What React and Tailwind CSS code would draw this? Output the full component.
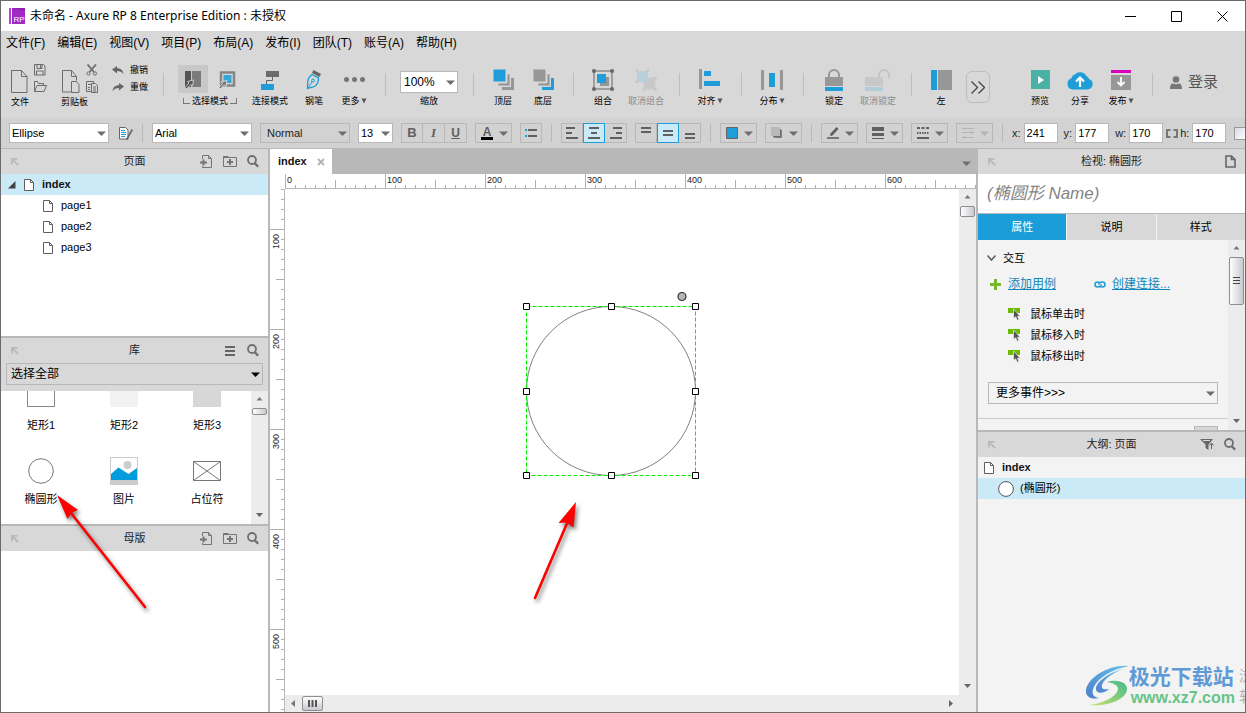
import React from "react";

/* ---------- shared pieces ---------- */

function Caret({ className = "text-[#6e6e6e]" }) {
  return (
    <svg width="9" height="5" viewBox="0 0 9 5" className={"shrink-0 " + className} aria-hidden="true">
      <path d="M0 0.5h9L4.5 5z" fill="currentColor" />
    </svg>
  );
}

function Select({ label, value, className, textClass = "text-[11px]", caret }) {
  return (
    <div className={"relative shrink-0 " + className}>
      <select
        aria-label={label}
        defaultValue={value}
        className={"block h-full w-full appearance-none border border-[#b8b8b8] bg-transparent outline-none " + textClass}
      >
        <option>{value}</option>
      </select>
      <span className="pointer-events-none absolute inset-y-0 right-[3px] flex items-center pt-px">
        <Caret className={caret} />
      </span>
    </div>
  );
}

function PageIcon({ w = 10, h = 12 }) {
  return (
    <svg width={w} height={h} viewBox="0 0 10 12" fill="none" className="shrink-0" aria-hidden="true">
      <path d="M0.5 0.5h6l3 3v8h-9z" fill="#fff" stroke="#5f5f5f" />
      <path d="M6.5 0.5v3h3" stroke="#5f5f5f" />
    </svg>
  );
}

function PinIcon() {
  return (
    <svg width="8" height="8" viewBox="0 0 8 8" fill="none" stroke="#b9b9b9" strokeWidth="1.800" aria-hidden="true">
      <path d="M.9 6.500V.9h5.600M1 1l6.200 6.200" />
    </svg>
  );
}

function SearchIcon() {
  return (
    <svg width="12" height="13" viewBox="0 0 12 13" fill="none" stroke="#6f6f6f" aria-hidden="true">
      <circle cx="5" cy="5" r="4" strokeWidth="1.8" />
      <path d="M7.8 8.2l3.4 3.6" strokeWidth="2.4" />
    </svg>
  );
}

function AddPageIcon() {
  return (
    <svg width="13" height="14" viewBox="0 0 13 14" fill="none" stroke="#757575" aria-hidden="true">
      <path d="M2.500 4V.5h6l3 3v9h-9V11" />
      <path d="M8.500.5v3h3" />
      <path d="M0 7.500h7M3.500 4.500v6" strokeWidth="2" />
    </svg>
  );
}

function AddFolderIcon() {
  return (
    <svg width="14" height="13" viewBox="0 0 14 13" fill="none" stroke="#757575" aria-hidden="true">
      <path d="M0.500 11.500V1.500h4l1 1h8v9z" />
      <path d="M0.500 2h5" strokeWidth="2" />
      <path d="M4 7h6M7 4v6" strokeWidth="2" />
    </svg>
  );
}

function PanelHeader({ title, children }) {
  return (
    <div className="grid h-[25px] shrink-0 grid-cols-[1fr_auto_1fr] items-center bg-[#d8d8d8] text-[#222]">
      <button aria-label="停靠" className="ml-[10px] w-3"><PinIcon /></button>
      <h2 className="text-[11px]">{title}</h2>
      <div className="flex items-center justify-end gap-[10px] pr-[9px]">{children}</div>
    </div>
  );
}

function ScrollThumbV({ className, grip }) {
  return (
    <div className={"flex w-[15px] items-center justify-center rounded-[2px] border border-[#8e8e8e] bg-linear-to-r from-white to-[#c9c9cf] " + className}>
      {grip && (
        <svg width="7" height="8" viewBox="0 0 7 8" stroke="#444" aria-hidden="true">
          <path d="M0 .5h7M0 3.500h7M0 6.500h7" />
        </svg>
      )}
    </div>
  );
}

function VScroll({ thumb, grip }) {
  return (
    <div className="flex w-[17px] shrink-0 flex-col items-center bg-[#ececec]">
      <svg width="7" height="17" viewBox="0 0 7 17" className="shrink-0" aria-hidden="true"><path d="M3.500 6L6.500 9.500h-6z" fill="#777" /></svg>
      <ScrollThumbV className={thumb} grip={grip} />
      <div className="flex-1" />
      <svg width="7" height="18" viewBox="0 0 7 18" className="shrink-0" aria-hidden="true"><path d="M0 7h7L3.500 11z" fill="#666" /></svg>
    </div>
  );
}

/* ---------- title and menu ---------- */

function TitleBar() {
  return (
    <header className="flex h-[30px] shrink-0 items-center bg-white pl-2">
      <svg width="16" height="16" viewBox="0 0 16 16" className="shrink-0" aria-hidden="true">
        <rect width="16" height="16" fill="#a02bc4" />
        <path d="M0 0h2v16H0z" fill="#b441d8" />
        <path d="M2.500 0v16" stroke="#fff" />
        <path d="M3 0h13v3z" fill="#8a1fae" />
        <text x="4.500" y="14" fontSize="8" fill="#fff" fontFamily="Liberation Sans, sans-serif">RP</text>
      </svg>
      <h1 className="ml-[5px] flex-1 font-['Noto_Sans','Noto_Sans_CJK_SC',sans-serif] text-[12px] leading-4 text-black">
        未命名 - Axure RP 8 Enterprise Edition : 未授权
      </h1>
      <button aria-label="最小化" className="flex h-full w-[46px] items-center justify-center">
        <svg width="11" height="11" viewBox="0 0 11 11" stroke="#000"><path d="M0 5.500h11" /></svg>
      </button>
      <button aria-label="最大化" className="flex h-full w-[46px] items-center justify-center">
        <svg width="11" height="11" viewBox="0 0 11 11" fill="none" stroke="#000"><path d="M.5.5h10v10H.5z" /></svg>
      </button>
      <button aria-label="关闭" className="flex h-full w-[46px] items-center justify-center">
        <svg width="11" height="11" viewBox="0 0 11 11" stroke="#000"><path d="M.5.5l10 10M10.500.5l-10 10" /></svg>
      </button>
    </header>
  );
}

const MENUS = ["文件(F)", "编辑(E)", "视图(V)", "项目(P)", "布局(A)", "发布(I)", "团队(T)", "账号(A)", "帮助(H)"];

function MenuBar() {
  return (
    <nav className="flex h-[24px] shrink-0 items-center gap-3 bg-[#d8d8d8] pl-[5px] text-[12px] text-black">
      {MENUS.map((m) => <button key={m} className="shrink-0 whitespace-nowrap">{m}</button>)}
    </nav>
  );
}

/* ---------- main toolbar ---------- */

function Sep() {
  return <div className="mt-[9px] mr-[14px] ml-[15px] h-[23px] w-px shrink-0 bg-[#bdbdbd]" />;
}

function Tool({ label, width = "w-[30px]", dim, menu, children }) {
  return (
    <button className={"flex shrink-0 flex-col items-center " + width}>
      <span className="flex h-[31px] items-center justify-center">{children}</span>
      <span className={"flex items-center gap-px text-[9px] leading-3 whitespace-nowrap " + (dim ? "text-[#8c8c8c]" : "text-black")}>
        {label}
        {menu && (
          <svg width="6" height="6" viewBox="0 0 6 6" aria-hidden="true"><path d="M0.500 0.500h5L3 5.500z" fill="#555" /></svg>
        )}
      </span>
    </button>
  );
}

function BigDoc() {
  return (
    <svg width="17" height="23" viewBox="0 0 17 23" fill="none" stroke="#6c6c6c" aria-hidden="true">
      <path d="M.5.5h10l5.500 6v16H.5z" /><path d="M10.500.5v6h5.500" />
    </svg>
  );
}

function Toolbar() {
  return (
    <div className="flex h-[63px] shrink-0 items-start overflow-hidden bg-[#d8d8d8] pt-[9px] pl-[10px]">
      <div className="w-[36px] shrink-0">
        <div className="flex h-8 justify-between">
          <button aria-label="新建文件" className="pt-[3px]"><BigDoc /></button>
          <div className="flex flex-col justify-between pb-1">
            <button aria-label="保存">
              <svg width="12" height="12" viewBox="0 0 12 12" fill="none" stroke="#6c6c6c"><path d="M.5.5h9l1.500 1.500v9H.5z" /><path d="M3 .5v4h5v-4M2.500 11V7h6.500v4" /><path d="M6.500 1v3" /></svg>
            </button>
            <button aria-label="打开">
              <svg width="13" height="11" viewBox="0 0 13 11" fill="none" stroke="#6c6c6c"><path d="M.5 10.500V.5h3l1 2h5v2" /><path d="M.5 10.500l2.500-6h9.500l-2.500 6z" /></svg>
            </button>
          </div>
        </div>
        <div className="text-[9px] leading-3">文件</div>
      </div>
      <div className="ml-[14px] w-[37px] shrink-0">
        <div className="flex h-8 justify-between">
          <button aria-label="粘贴" className="pt-[3px] pl-px">
            <svg width="18" height="23" viewBox="0 0 18 23" fill="none" stroke="#6c6c6c"><path d="M9 22H.5V.5h9l5 6v4" /><path d="M9.500.5v6h5" /><path d="M9.500 11.500h5l2.500 3v8H9.500z" fill="#d8d8d8" /></svg>
          </button>
          <div className="flex flex-col justify-between pb-[3px]">
            <button aria-label="剪切">
              <svg width="12" height="12" viewBox="0 0 12 12" fill="none" stroke="#6c6c6c"><path d="M1.500.5l6.500 7.500M10 .5L3.500 8" strokeWidth="1.800" /><circle cx="2.500" cy="9.500" r="1.600" /><circle cx="9" cy="9.500" r="1.600" /></svg>
            </button>
            <button aria-label="复制">
              <svg width="12" height="12" viewBox="0 0 12 12" fill="none" stroke="#6c6c6c"><path d="M5 10.500H.5V.5h7v2" /><path d="M2 3.500h3M2 6.500h2M2 8.500h2" /><path d="M5.500 2.500h4l2 2v7h-6zM7 6h3M7 8h3M7 10h3" /></svg>
            </button>
          </div>
        </div>
        <div className="text-[9px] leading-3">剪贴板</div>
      </div>
      <div className="ml-[14px] flex w-[36px] shrink-0 flex-col gap-[5px] text-[9px] leading-3 text-black">
        <button className="flex items-center gap-[6px] whitespace-nowrap">
          <svg width="12" height="9" viewBox="0 0 12 9" className="shrink-0" aria-hidden="true"><path d="M0 3.500L5 0v2.300c4 0 6 2 6.500 6C10 6 8 5 5 5v2.500z" fill="#666" /></svg>撤销
        </button>
        <button className="flex items-center gap-[6px] whitespace-nowrap">
          <svg width="12" height="9" viewBox="0 0 12 9" className="shrink-0" aria-hidden="true"><path d="M12 3.500L7 0v2.300C3 2.300 1 4.300.5 8.300 2 6 4 5 7 5v2.500z" fill="#666" /></svg>重做
        </button>
      </div>
      <Sep />
      <div className="w-[64px] shrink-0">
        <div className="flex h-[31px] justify-between">
          <button aria-label="相交选择" className="mt-px flex h-7 w-[30px] items-center justify-center bg-[#c8c8c8]">
            <svg width="18" height="20" viewBox="0 0 18 20"><path d="M1 2h6v16H1z" fill="#555" /><path d="M8 2h9v16H8z" fill="#7b7b7b" /><path d="M9.500 11l-1 6-1.800-1.500L2.500 20 1 18.500l4-4.500-1.500-1.500z" fill="#555" stroke="#ddd" strokeWidth=".8" /></svg>
          </button>
          <button aria-label="包含选择" className="mt-px flex h-7 w-[30px] items-center justify-center">
            <svg width="18" height="20" viewBox="0 0 18 20"><path d="M3 3.500h13v13H3z" fill="#d8d8d8" stroke="#858585" strokeWidth="2.500" /><path d="M5.500 6h8v8h-8z" fill="#35a6da" /><path d="M9 11.500l-1 6-1.800-1.500L2.500 20 .8 18.500l3.700-4-1.500-1.500z" fill="#777" stroke="#eee" strokeWidth=".8" /></svg>
          </button>
        </div>
        <div className="flex items-center justify-center gap-[2px] text-[9px] leading-3 whitespace-nowrap text-black">
          <span className="h-[6px] w-[7px] border-b border-l border-[#777]" />
          选择模式
          <span className="h-[6px] w-[7px] border-r border-b border-[#777]" />
        </div>
      </div>
      <div className="ml-2 flex gap-2">
        <Tool label="连接模式" width="w-[40px]">
          <svg width="20" height="20" viewBox="0 0 20 20" fill="none"><path d="M12.500 6v4.500h-6V14" stroke="#666" /><path d="M6 1h13v6H6z" fill="#6b6b6b" /><path d="M1 14h13v6H1z" fill="#1e9dd8" /></svg>
        </Tool>
        <Tool label="钢笔" width="w-[32px]">
          <svg width="16" height="20" viewBox="0 0 16 20" fill="none"><path d="M7.500 0l7.500 4-1.500 3L6 3z" fill="#666" /><path d="M6 4.500l6.500 3.500c.3 4-2 8-5 9L1.500 18.500 1.800 11C2.200 8 4 6 6 4.500z" stroke="#1e9dd8" strokeWidth="1.300" /><path d="M2 18l4.500-7" stroke="#1e9dd8" /><circle cx="7" cy="10.500" r="1.400" stroke="#1e9dd8" /></svg>
        </Tool>
        <Tool label="更多" width="w-[32px]" menu>
          <svg width="21" height="5" viewBox="0 0 21 5" fill="#757575"><circle cx="2.500" cy="2.500" r="2.500" /><circle cx="10.500" cy="2.500" r="2.500" /><circle cx="18.500" cy="2.500" r="2.500" /></svg>
        </Tool>
      </div>
      <Sep />
      <div className="flex w-[58px] shrink-0 flex-col items-center pt-[7px]">
        <Select label="缩放" value="100%" className="h-[22px] w-full bg-white" textClass="pl-[3px] text-[12px]" />
        <span className="mt-[2px] text-[9px] leading-3 text-black">缩放</span>
      </div>
      <Sep />
      <div className="flex gap-[10px]">
        <Tool label="顶层">
          <svg width="21" height="21" viewBox="0 0 21 21" fill="#979797"><path d="M18 9h3v12H9v-3h9z" /><path d="M14 5h3v12H5v-3h9z" stroke="#d8d8d8" strokeWidth=".8" /><path d="M0 0h13v13H0z" fill="#1e9dd8" stroke="#d8d8d8" /></svg>
        </Tool>
        <Tool label="底层">
          <svg width="21" height="21" viewBox="0 0 21 21" fill="#979797"><path d="M18 9h3v12H9v-3h9z" fill="#1e9dd8" /><path d="M14 5h3v12H5v-3h9z" stroke="#d8d8d8" strokeWidth=".8" /><path d="M0 0h13v13H0z" stroke="#d8d8d8" /></svg>
        </Tool>
      </div>
      <Sep />
      <div className="flex gap-[10px]">
        <Tool label="组合">
          <svg width="22" height="22" viewBox="0 0 22 22" fill="#666"><path d="M2 2h18v18H2z" fill="none" stroke="#666" /><circle cx="2" cy="2" r="2" /><circle cx="20" cy="2" r="2" /><circle cx="2" cy="20" r="2" /><circle cx="20" cy="20" r="2" /><path d="M8 8h9v9H8z" fill="#979797" /><path d="M5 5h9v9H5z" fill="#1e9dd8" /></svg>
        </Tool>
        <Tool label="取消组合" width="w-[36px]" dim>
          <svg width="22" height="22" viewBox="0 0 22 22"><path d="M9 9h11v11H9z" fill="#c8c8c8" stroke="#ccc" /><path d="M2 2h11v11H2z" fill="#b9cfd9" /><g fill="#c4c4c4"><circle cx="1.500" cy="1.500" r="1.300" /><circle cx="13" cy="1.500" r="1.300" /><circle cx="1.500" cy="13" r="1.300" /><circle cx="20.500" cy="9" r="1.300" /><circle cx="20.500" cy="20.500" r="1.300" /><circle cx="9" cy="20.500" r="1.300" /></g></svg>
        </Tool>
      </div>
      <Sep />
      <Tool label="对齐" width="w-[32px]" menu>
        <svg width="22" height="21" viewBox="0 0 22 21"><path d="M0 0h3v20H0z" fill="#979797" /><path d="M5 2h7v5H5zM5 12h16v5H5z" fill="#1e9dd8" /></svg>
      </Tool>
      <Sep />
      <Tool label="分布" width="w-[32px]" menu>
        <svg width="22" height="20" viewBox="0 0 22 20"><path d="M0 0h3v20H0zM19 0h3v20h-3z" fill="#979797" /><path d="M8 3h6v14H8z" fill="#1e9dd8" /></svg>
      </Tool>
      <Sep />
      <div className="flex gap-[10px]">
        <Tool label="锁定" width="w-[32px]">
          <svg width="18" height="22" viewBox="0 0 18 22"><path d="M4 9V6a5 5 0 0 1 10 0v3" fill="none" stroke="#979797" strokeWidth="2" /><path d="M0 8h18v9H0z" fill="#979797" /><path d="M0 18h18v4H0z" fill="#1e9dd8" /></svg>
        </Tool>
        <Tool label="取消锁定" width="w-[36px]" dim>
          <svg width="26" height="22" viewBox="0 0 26 22"><path d="M14 9V6a5 5 0 0 1 10 0v3" fill="none" stroke="#c4c4c4" strokeWidth="2" /><path d="M0 8h18v9H0z" fill="#c8c8c8" /><path d="M0 18h18v4H0z" fill="#b3ccd9" /></svg>
        </Tool>
      </div>
      <Sep />
      <div className="flex gap-[10px]">
        <Tool label="左">
          <svg width="21" height="20" viewBox="0 0 21 20"><path d="M0 0h6v20H0z" fill="#1e9dd8" /><path d="M7 0h14v20H7z" fill="#979797" /></svg>
        </Tool>
        <button aria-label="更多工具" className="mt-[7px] flex h-[32px] w-[24px] shrink-0 items-center justify-center rounded-[6px] border border-[#bdbdbd]">
          <svg width="14" height="13" viewBox="0 0 14 13" fill="none" stroke="#444" strokeWidth="1.300"><path d="M.5.5l6 6-6 6M7.500.5l6 6-6 6" /></svg>
        </button>
      </div>
      <div className="ml-[35px] flex gap-[10px]">
        <Tool label="预览">
          <svg width="19" height="19" viewBox="0 0 19 19"><path d="M0 0h19v19H0z" fill="#4bb1a6" /><path d="M7 6l6 4-6 4z" fill="#fff" /></svg>
        </Tool>
        <Tool label="分享">
          <svg width="26" height="20" viewBox="0 0 26 20"><path d="M6 19.500a5.800 5.800 0 0 1-1.500-11.300A4.500 4.500 0 0 1 8 4.500 7 7 0 0 1 19.500 6 5 5 0 0 1 22 9a5.400 5.400 0 0 1-1.500 10.500z" fill="#1e9dd8" /><path d="M13 17V9M9 11.500L13 7.500l4 4" fill="none" stroke="#fff" strokeWidth="2.200" /></svg>
        </Tool>
        <Tool label="发布" width="w-[32px]" menu>
          <svg width="20" height="20" viewBox="0 0 20 20"><path d="M0 0h20v3H0z" fill="#d800c0" /><path d="M0 5h20v15H0z" fill="#979797" /><path d="M10 7v8M6.500 12L10 15.500l3.500-3.500" fill="none" stroke="#fff" strokeWidth="1.800" /></svg>
        </Tool>
      </div>
      <Sep />
      <button className="mt-[8px] ml-[3px] flex shrink-0 items-center gap-[6px] text-[15px] leading-5 whitespace-nowrap text-[#555]">
        <svg width="12" height="13" viewBox="0 0 12 13" fill="#777" aria-hidden="true"><circle cx="6" cy="3.500" r="3.300" /><path d="M0 13c0-4 1.500-5.500 3-5.500 2 1 4 1 6 0 1.500 0 3 1.500 3 5.500z" /></svg>
        登录
      </button>
    </div>
  );
}

/* ---------- format bar ---------- */

function FSep() {
  return <div className="mx-px h-[18px] w-px shrink-0 bg-[#b8b8b8]" />;
}

function Segments({ items, active }) {
  return (
    <div className="flex shrink-0">
      {items.map((it, i) => (
        <button
          key={it.name}
          aria-label={it.name}
          className={
            "flex h-5 w-[22px] items-center justify-center border " +
            (i === active ? "border-[#1e9dd8] bg-[#cbeaf7]" : i === 0 ? "border-[#b8b8b8]" : "border-l-0 border-[#b8b8b8]")
          }
        >
          {it.icon}
        </button>
      ))}
    </div>
  );
}

function Lines({ d }) {
  return <svg width="12" height="12" viewBox="0 0 12 12" stroke="#606060" strokeWidth="2"><path d={d} /></svg>;
}

function DropTool({ name, dim, children }) {
  return (
    <button aria-label={name} className="flex h-5 w-[37px] shrink-0 items-center justify-between border border-[#b8b8b8] pr-[3px] pl-[5px]">
      {children}
      <Caret className={dim ? "text-[#b5b5b5]" : "text-[#6e6e6e]"} />
    </button>
  );
}

function Field({ id, label, value }) {
  return (
    <div className="flex shrink-0 items-center justify-between gap-[3px]">
      <label htmlFor={id} className="text-[11px] text-[#222]">{label}</label>
      <input id={id} defaultValue={value} className="h-5 w-[34px] border border-[#b8b8b8] bg-white pl-[2px] text-[11px] text-black outline-none" />
    </div>
  );
}

function FormatBar() {
  return (
    <div className="flex h-[31px] shrink-0 items-center gap-2 overflow-hidden border-b border-[#b8b8b8] bg-[#d2d2d2] pl-2">
      <Select label="元件样式" value="Ellipse" className="h-5 w-[100px] bg-white" textClass="pl-[2px] text-[11px]" />
      <button aria-label="管理样式" className="ml-[2px] shrink-0">
        <svg width="14" height="13" viewBox="0 0 14 13" fill="none"><path d="M.5.5h6l2.500 2.500v9H.5z" fill="#fff" stroke="#666" /><path d="M2 3.500h4M2 5.500h5M2 7.500h5M2 9.500h4" stroke="#1e9dd8" /><path d="M13.300 2.500L8.500 11l-1 1.500" stroke="#666" strokeWidth="1.600" /></svg>
      </button>
      <FSep />
      <Select label="字体" value="Arial" className="h-5 w-[100px] bg-white" textClass="pl-[2px] text-[11px]" />
      <Select label="字形" value="Normal" className="h-5 w-[90px]" textClass="pl-[6px] text-[11px] text-[#222]" />
      <Select label="字号" value="13" className="h-5 w-[35px] bg-white" textClass="pl-[2px] text-[11px]" />
      <Segments
        items={[
          { name: "粗体", icon: <span className="text-[13px] leading-4 font-bold text-[#606060]">B</span> },
          { name: "斜体", icon: <span className="font-['Liberation_Serif',serif] text-[13px] leading-4 font-bold text-[#606060] italic">I</span> },
          { name: "下划线", icon: <span className="text-[12px] leading-4 font-bold text-[#606060] underline">U</span> },
        ]}
      />
      <DropTool name="文字颜色">
        <span className="flex w-3 flex-col items-center text-[12px] leading-[10px] font-bold text-[#606060]">A<span className="h-[3px] w-3 bg-black" /></span>
      </DropTool>
      <Segments items={[{ name: "项目符号", icon: <svg width="12" height="10" viewBox="0 0 12 10"><path d="M0 1h2v2H0zM0 7h2v2H0z" fill="#1e9dd8" /><path d="M3 1h9v2H3zM3 7h9v2H3z" fill="#606060" /></svg> }]} />
      <FSep />
      <Segments
        active={1}
        items={[
          { name: "左对齐", icon: <Lines d="M0 1h9M0 6h6M0 11h12" /> },
          { name: "居中", icon: <Lines d="M1 1h10M3 6h6M0 11h12" /> },
          { name: "右对齐", icon: <Lines d="M3 1h9M6 6h6M0 11h12" /> },
        ]}
      />
      <Segments
        active={1}
        items={[
          { name: "顶部", icon: <Lines d="M1 1h10M1 5h10" /> },
          { name: "中部", icon: <Lines d="M1 4h10M1 8h10" /> },
          { name: "底部", icon: <Lines d="M1 7h10M1 11h10" /> },
        ]}
      />
      <FSep />
      <DropTool name="填充颜色"><svg width="12" height="12" viewBox="0 0 12 12"><path d="M.5.5h11v11H.5z" fill="#1e9dd8" stroke="#666" /></svg></DropTool>
      <DropTool name="阴影"><svg width="12" height="12" viewBox="0 0 12 12"><path d="M3 3h8v8H3z" fill="#808080" /><path d="M2 2h8v8H2z" fill="#707070" /><path d="M0 0h9v9H0z" fill="#b9b9b9" /></svg></DropTool>
      <FSep />
      <DropTool name="线条颜色"><svg width="13" height="12" viewBox="0 0 13 12"><path d="M9.500 0l2 2-6 6.500L3 9l.5-2.500z" fill="#606060" /><path d="M0 10h12v2H0z" fill="#777" /></svg></DropTool>
      <DropTool name="线宽"><svg width="12" height="12" viewBox="0 0 12 12" fill="#606060"><path d="M0 0h12v4H0zM0 6h12v3H0zM0 11h12v1H0z" /></svg></DropTool>
      <DropTool name="线型"><svg width="12" height="12" viewBox="0 0 12 12" stroke="#606060" strokeWidth="2"><path d="M0 1h12" strokeDasharray="3 1.500" /><path d="M0 6h12" strokeDasharray="1.500 1" /><path d="M0 11h12" /></svg></DropTool>
      <DropTool name="箭头" dim><svg width="12" height="12" viewBox="0 0 12 12" fill="#b5b5b5" stroke="#b5b5b5"><path d="M0 1.500h12M0 5.500h12M0 10.500h12" /><path d="M3 0v3L.5 1.500zM9 4v3l2.500-1.500zM3 9v3L.5 10.500z" stroke="none" /></svg></DropTool>
      <FSep />
      <div className="flex shrink-0 items-center gap-[6px]">
        <Field id="pos-x" label="x:" value="241" />
        <Field id="pos-y" label="y:" value="177" />
        <Field id="size-w" label="w:" value="170" />
      </div>
      <div className="-ml-[5px] flex shrink-0 items-center gap-[2px]">
        <button aria-label="保持宽高比">
          <svg width="12" height="9" viewBox="0 0 12 9" fill="none" stroke="#777" strokeWidth="2"><path d="M4.500 1H1v7h3.500M7.500 1H11v7H7.500" /></svg>
        </button>
        <Field id="size-h" label="h:" value="170" />
      </div>
      <input type="checkbox" aria-label="隐藏" className="size-[13px] shrink-0 appearance-none border border-[#999] bg-linear-to-br from-[#d8dce4] to-white" />
    </div>
  );
}

/* ---------- left side ---------- */

function TreeRow({ label }) {
  return (
    <li className="flex h-[21px] items-center gap-2 pl-[42px] text-[11px] text-black"><PageIcon />{label}</li>
  );
}

function LibItem({ label, children }) {
  return (
    <button className="flex h-[74px] flex-col items-center pt-px text-[11px] leading-4 text-black">
      <span className="flex h-[40px] items-center">{children}</span>
      {label}
    </button>
  );
}

function LeftSide() {
  return (
    <aside className="flex w-[267px] shrink-0 flex-col">
      <section className="flex h-[187px] shrink-0 flex-col bg-white">
        <PanelHeader title="页面">
          <button aria-label="添加页面"><AddPageIcon /></button>
          <button aria-label="添加文件夹"><AddFolderIcon /></button>
          <button aria-label="搜索页面"><SearchIcon /></button>
        </PanelHeader>
        <ul>
          <li>
            <div className="flex h-[21px] items-center gap-2 bg-[#cbeaf7] pl-[7px] text-[11px] font-bold text-[#111]">
              <svg width="8" height="8" viewBox="0 0 8 8" aria-hidden="true"><path d="M7.500 0v7.500H0z" fill="#444" /></svg>
              <PageIcon />
              index
            </div>
            <ul><TreeRow label="page1" /><TreeRow label="page2" /><TreeRow label="page3" /></ul>
          </li>
        </ul>
      </section>
      <section className="flex h-[190px] shrink-0 flex-col border-y-2 border-[#b8b8b8] bg-white">
        <PanelHeader title="库">
          <button aria-label="库选项" className="mr-[2px]">
            <svg width="10" height="10" viewBox="0 0 10 10" fill="#666"><path d="M0 0h10v2H0zM0 4h10v2H0zM0 8h10v2H0z" /></svg>
          </button>
          <button aria-label="搜索元件"><SearchIcon /></button>
        </PanelHeader>
        <div className="h-[28px] shrink-0 bg-[#d8d8d8] px-[5px]">
          <Select label="选择库" value="选择全部" className="h-[22px] w-full" textClass="pl-[4px] text-[12px] text-black" caret="text-black" />
        </div>
        <div className="flex min-h-0 flex-1">
          <div className="grid min-w-0 flex-1 grid-cols-[80px_86px_80px] content-end overflow-hidden">
            <LibItem label="矩形1"><span className="h-5 w-7 border border-[#888]" /></LibItem>
            <LibItem label="矩形2"><span className="h-5 w-7 bg-[#f2f2f2]" /></LibItem>
            <LibItem label="矩形3"><span className="h-5 w-7 bg-[#d7d7d7]" /></LibItem>
            <LibItem label="椭圆形"><svg width="26" height="26" viewBox="0 0 26 26"><circle cx="13" cy="13" r="12.300" fill="#fff" stroke="#777" /></svg></LibItem>
            <LibItem label="图片"><svg width="28" height="28" viewBox="0 0 28 28"><path d="M.5.5h27v27H.5z" fill="#fff" stroke="#ccc" /><circle cx="17.500" cy="8" r="4" fill="#ccc" /><path d="M1 23v-6l7.500-6.500 10 6.500L27 11v12z" fill="#029bdb" /><path d="M0 23h28v5H0z" fill="#ccc" /></svg></LibItem>
            <LibItem label="占位符"><svg width="28" height="20" viewBox="0 0 28 20" fill="none" stroke="#777"><path d="M.5.5h27v19H.5zM.5.5l27 19M27.500.5l-27 19" /></svg></LibItem>
          </div>
          <VScroll thumb="h-[7px]" />
        </div>
      </section>
      <section className="flex min-h-0 flex-1 flex-col bg-white">
        <PanelHeader title="母版">
          <button aria-label="添加母版"><AddPageIcon /></button>
          <button aria-label="添加母版文件夹"><AddFolderIcon /></button>
          <button aria-label="搜索母版"><SearchIcon /></button>
        </PanelHeader>
      </section>
    </aside>
  );
}

/* ---------- canvas ---------- */

const TOP_LABELS = [0, 100, 200, 300, 400, 500, 600];
const SIDE_LABELS = [100, 200, 300, 400, 500];
const SIDE_START = 60;

function TopRuler() {
  const ticks = Array.from({ length: 200 }, (_, i) => i);
  return (
    <svg className="h-[15px] min-w-0 flex-1 border-b border-[#b8b8b8]" aria-hidden="true">
      {ticks.map((i) => {
        const x = i * 10 + 0.5;
        const top = i % 10 === 0 ? 0 : i % 5 === 0 ? 6 : 11;
        return <path key={i} d={`M${x} ${top}V15`} stroke="#b0b0b0" />;
      })}
      {TOP_LABELS.map((n) => (
        <text key={n} x={n + 2} y="9" fontSize="9" fill="#222">{n}</text>
      ))}
    </svg>
  );
}

function SideRuler() {
  const ticks = Array.from({ length: 150 }, (_, i) => i);
  return (
    <svg className="h-full w-[15px] shrink-0 border-r border-[#b8b8b8]" aria-hidden="true">
      {ticks.map((i) => {
        const y = i * 10 + 0.5;
        const n = i + SIDE_START / 10;
        const left = n % 10 === 0 ? 0 : n % 5 === 0 ? 6 : 11;
        return <path key={i} d={`M${left} ${y}H15`} stroke="#b0b0b0" />;
      })}
      {SIDE_LABELS.map((n) => (
        <text key={n} transform={`translate(9 ${n - SIDE_START + 20}) rotate(-90)`} fontSize="9" fill="#222">{n}</text>
      ))}
    </svg>
  );
}

const HANDLES = [[4, 14], [89, 14], [173, 14], [4, 99], [173, 99], [4, 183], [89, 183], [173, 183]];

function Canvas() {
  return (
    <main className="flex min-w-0 flex-1 flex-col border-x-2 border-[#b8b8b8] bg-white">
      <div className="flex h-[25px] shrink-0 items-stretch justify-between bg-[#b8b8b8]">
        <div className="flex w-[62px] items-center justify-between bg-white pr-[7px] pl-2 text-[11px] font-bold text-[#111]">
          index
          <button aria-label="关闭标签"><svg width="8" height="8" viewBox="0 0 8 8" stroke="#b5b5b5" strokeWidth="2"><path d="M1 1l6 6M7 1L1 7" /></svg></button>
        </div>
        <button aria-label="标签列表" className="px-[5px] pt-1"><Caret /></button>
      </div>
      <div className="flex pl-[15px]"><TopRuler /></div>
      <div className="flex min-h-0 flex-1">
        <SideRuler />
        <div className="flex min-w-0 flex-1 flex-col">
          <div className="flex min-h-0 flex-1">
            <div className="relative min-w-0 flex-1 overflow-hidden bg-white">
              <svg width="178" height="190" viewBox="0 0 178 190" fill="none" className="absolute top-[103px] left-[237px]" role="img" aria-label="椭圆形">
                <circle cx="89" cy="99" r="84.500" fill="#fff" stroke="#808080" />
                <path d="M4.500 14.500h169v169h-169z" stroke="#00f000" strokeDasharray="4 2" />
                {HANDLES.map(([x, y]) => (
                  <path key={x + "-" + y} d={`M${x - 2.5} ${y - 2.5}h6v6h-6z`} fill="#fff" stroke="#000" />
                ))}
                <circle cx="160" cy="4.500" r="4" fill="#b5b5b5" stroke="#333" strokeWidth="1.200" />
              </svg>
            </div>
            <VScroll thumb="h-[11px]" />
          </div>
          <div className="flex h-[17px] shrink-0 items-center bg-[#ececec] pr-[21px]">
            <svg width="17" height="7" viewBox="0 0 17 7" className="shrink-0" aria-hidden="true"><path d="M10 0v7L6 3.500z" fill="#777" /></svg>
            <div className="flex h-[15px] w-[21px] items-center justify-center rounded-[2px] border border-[#8e8e8e] bg-linear-to-b from-white to-[#c9c9cf]">
              <svg width="9" height="7" viewBox="0 0 9 7" stroke="#555" strokeWidth="2" aria-hidden="true"><path d="M1 0v7M4.500 0v7M8 0v7" /></svg>
            </div>
            <div className="flex-1" />
            <svg width="8" height="7" viewBox="0 0 8 7" aria-hidden="true"><path d="M2 0v7l4-3.500z" fill="#666" /></svg>
          </div>
        </div>
      </div>
    </main>
  );
}

/* ---------- right side ---------- */

function RightSide() {
  return (
    <aside className="flex w-[267px] shrink-0 flex-col bg-[#f3f3f3]">
      <section className="flex h-[281px] shrink-0 flex-col">
        <PanelHeader title="检视: 椭圆形">
          <button aria-label="页面属性">
            <svg width="11" height="13" viewBox="0 0 11 13" fill="none" stroke="#666" strokeWidth="1.600"><path d="M1 1h5.500L10 4.500V12H1z" /><path d="M6.500 1v3.500H10" /></svg>
          </button>
        </PanelHeader>
        <input
          aria-label="元件名称"
          placeholder="(椭圆形 Name)"
          className="h-[39px] shrink-0 bg-white pl-[9px] text-[17px] italic outline-none placeholder:text-[#858585]"
        />
        <div className="grid h-[27px] shrink-0 grid-cols-3 gap-px border-t border-[#b8b8b8] bg-[#f3f3f3] text-[11px] text-black">
          <button className="bg-[#1b9dd9] text-white">属性</button>
          <button className="bg-[#d8d8d8]">说明</button>
          <button className="bg-[#d8d8d8]">样式</button>
        </div>
        <div className="flex min-h-0 flex-1">
          <div className="min-w-0 flex-1 overflow-hidden">
            <button className="mt-[10px] ml-[9px] flex h-4 items-center gap-[7px] text-[11px] text-black">
              <svg width="9" height="6" viewBox="0 0 9 6" fill="none" stroke="#555" strokeWidth="1.500" aria-hidden="true"><path d="M.5.5l4 4.500 4-4.500" /></svg>
              交互
            </button>
            <div className="mt-[8px] ml-[12px] flex h-5 items-center text-[12px] text-[#0e87bd]">
              <svg width="11" height="11" viewBox="0 0 11 11" aria-hidden="true"><path d="M4 0h3v4h4v3H7v4H4V7H0V4h4z" fill="#76b82a" /></svg>
              <a href="#case" className="ml-[7px] underline">添加用例</a>
              <svg width="12" height="7" viewBox="0 0 12 7" fill="none" stroke="#1e9dd8" strokeWidth="1.600" className="ml-[38px]" aria-hidden="true"><path d="M7.500 3.500C6.500 5.500 5.500 6 3.500 6a2.500 2.500 0 0 1 0-5C4.800 1 5.500 1.300 6 2M4.500 3.500C5.500 1.500 6.500 1 8.500 1a2.500 2.500 0 0 1 0 5C7.200 6 6.500 5.700 6 5" /></svg>
              <a href="#link" className="ml-[6px] underline">创建连接...</a>
            </div>
            <ul className="mt-[10px] ml-[30px] text-[11px] text-black">
              {["鼠标单击时", "鼠标移入时", "鼠标移出时"].map((t) => (
                <li key={t} className="flex h-[21px] items-center gap-[9px]">
                  <svg width="13" height="13" viewBox="0 0 13 13" aria-hidden="true"><path d="M0 0h12v5H0z" fill="#6cbb00" /><path d="M5.500 1v9.500l2.200-1.700 1.500 3.500 1.800-.8-1.500-3.300h2.800z" fill="#555" stroke="#f3f3f3" strokeWidth=".7" /></svg>
                  {t}
                </li>
              ))}
            </ul>
            <Select label="更多事件" value="更多事件>>>" className="mx-[10px] mt-[15px] h-[22px]" textClass="pl-[7px] text-[12px] text-black" />
            <div className="mt-[14px] flex justify-end border-t border-[#ccc] pt-[7px] pr-[10px]">
              <div className="h-5 w-[24px] border border-[#b8b8b8] bg-[#d8d8d8]" />
            </div>
          </div>
          <VScroll thumb="h-[48px]" grip />
        </div>
      </section>
      <section className="flex min-h-0 flex-1 flex-col border-t-2 border-[#b8b8b8]">
        <PanelHeader title="大纲: 页面">
          <button aria-label="筛选">
            <svg width="14" height="11" viewBox="0 0 14 11" aria-hidden="true"><path d="M0 0h13L8.500 5.500V11L5.500 9V5.500z" fill="#666" /><path d="M3 1.500h7" stroke="#d8d8d8" /><path d="M11.500 10V4M9.500 6.500l2-2.500 2 2.500" fill="none" stroke="#666" /></svg>
          </button>
          <button aria-label="搜索大纲"><SearchIcon /></button>
        </PanelHeader>
        <ul className="text-[11px] text-black">
          <li className="flex h-[21px] items-center gap-[8px] pl-[6px] font-bold text-[#111]"><PageIcon />index</li>
          <li className="flex h-[21px] items-center gap-[6px] bg-[#cbeaf7] pl-[20px]">
            <svg width="16" height="16" viewBox="0 0 16 16" aria-hidden="true"><circle cx="8" cy="8" r="7.400" fill="#fff" stroke="#555" /></svg>
            (椭圆形)
          </li>
        </ul>
      </section>
    </aside>
  );
}

/* ---------- overlays ---------- */

function Arrows() {
  return (
    <svg width="600" height="620" viewBox="0 0 600 620" className="pointer-events-none absolute top-0 left-0 drop-shadow-[2px_3px_2px_rgba(0,0,0,0.5)]" aria-hidden="true">
      <g stroke="#f00" strokeWidth="2.600" strokeLinecap="round">
        <path d="M144 606L70 512" /><path d="M534 597L567 520" />
      </g>
      <path d="M56 494l10.500 24 4-6 6.500-3z" fill="#f00" />
      <path d="M575 501l-17.500 21 8-.5 7 5z" fill="#f00" />
    </svg>
  );
}

function Watermark() {
  return (
    <div className="pointer-events-none absolute right-0 bottom-[5px] flex items-center overflow-hidden">
      <svg width="43" height="42" viewBox="0 0 43 42" aria-hidden="true">
        <defs>
          <linearGradient id="wm-blue" x1="0" y1="1" x2="1" y2="0"><stop offset="0" stopColor="#4f7fd0" /><stop offset="1" stopColor="#63c3e8" /></linearGradient>
          <linearGradient id="wm-green" x1="0" y1="1" x2="1" y2="0"><stop offset="0" stopColor="#c9e36c" /><stop offset="1" stopColor="#43b98a" /></linearGradient>
        </defs>
        <path d="M43 1C24-1 2 12 0 25c-1 7 6 10 13 8-6-1-8-5-5-11C12 13 26 4 43 1z" fill="url(#wm-blue)" />
        <path d="M37 4C22 8 10 17 10 24c0 5 8 5 13 0-5 1-8 0-7-4 2-6 11-12 21-16z" fill="url(#wm-blue)" />
        <path d="M21 17c8-3 20-1 20 7C41 34 22 42 4 40c13-2 27-8 28-16 0-4-5-6-11-7z" fill="url(#wm-green)" />
      </svg>
      <div className="flex flex-col font-bold whitespace-nowrap">
        <span className="text-[21px] leading-6 text-[#5f9ad6]">极光下载站</span>
        <span className="pl-[2px] font-['Liberation_Sans',sans-serif] text-[16px] leading-[18px] text-[#66c488]">www.xz7.com</span>
      </div>
      <div className="ml-[4px] flex w-[6px] flex-col overflow-hidden text-[15px] leading-[21px] whitespace-nowrap text-[#b0b0b0]">
        <span>浏</span><span>软</span>
      </div>
    </div>
  );
}

export default function App() {
  return (
    <div className="relative flex h-screen flex-col overflow-hidden border border-[#6b6b6b] bg-white font-['Liberation_Sans','Noto_Sans_CJK_SC',sans-serif]">
      <TitleBar />
      <MenuBar />
      <Toolbar />
      <FormatBar />
      <div className="flex min-h-0 flex-1">
        <LeftSide />
        <Canvas />
        <RightSide />
      </div>
      <Arrows />
      <Watermark />
    </div>
  );
}
